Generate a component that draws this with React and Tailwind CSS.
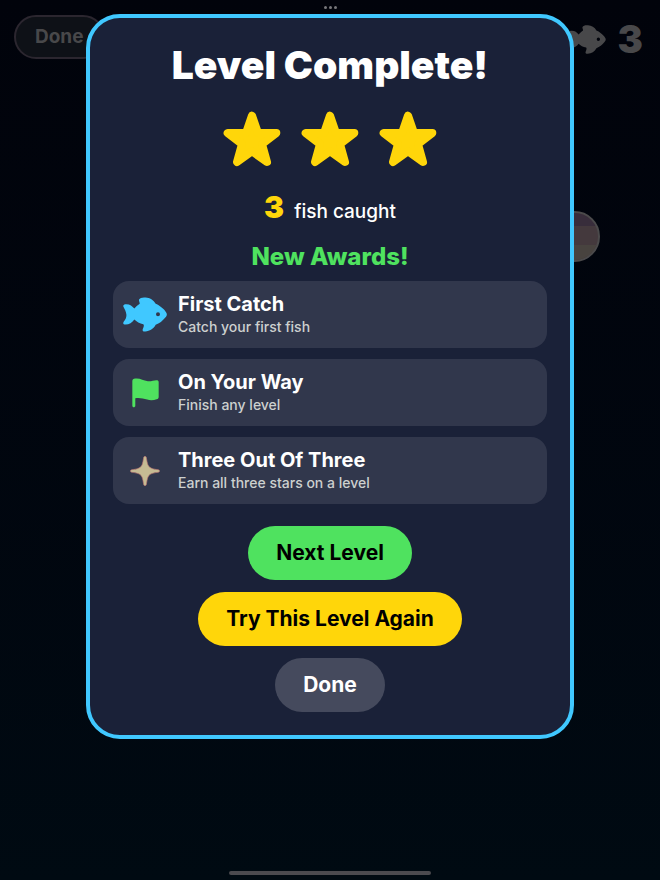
const FishIcon = ({ className }) => (
  <svg className={className} viewBox="0 0 132 104" fill="currentColor" aria-hidden="true">
    <path
      fillRule="evenodd"
      d="M1 28C0 23 3 21 10 21C21 21 28 27 34 34C39 29 43 25 50 20C51 17 47 12 48 7C51 2 58 0 68 1C80 2 92 8 98 20C108 24 121 34 127 42C133 50 133 54 127 61C119 71 109 79 98 83C92 95 80 102 67 103C60 104 57 100 60 94C62 89 64 85 61 81C50 79 41 74 34 67C28 76 18 82 8 82C1 82 -1 79 2 74C9 66 11 58 10 51C9 43 5 36 1 28ZM105 45A6 6 0 1 0 105 57A6 6 0 1 0 105 45Z"
    />
  </svg>
)

const StarIcon = () => (
  <svg className="w-[58px] h-14" viewBox="0 0 174 168" fill="currentColor" stroke="currentColor" strokeWidth="24" strokeLinejoin="round" aria-hidden="true">
    <path d="M87 14L105 66H160L117 99L132 153L87 121L42 153L57 99L14 66H69Z" />
  </svg>
)

const FlagIcon = ({ className }) => (
  <svg className={className} viewBox="0 0 82 88" fill="currentColor" aria-hidden="true">
    <path d="M1 8C1 3 4 1 10 0C24 -2 34 6 48 8C58 9 66 5 74 5C79 5 81 7 81 11V56C81 60 79 62 75 63C66 66 56 67 46 64C34 61 22 57 10 60V83C10 89 1 89 1 83Z" />
  </svg>
)

const SparkleIcon = ({ className }) => (
  <svg className={className} viewBox="0 0 92 92" fill="currentColor" stroke="#b5716f" strokeWidth="2" aria-hidden="true">
    <path d="M42 4C43 0 49 0 50 4C52 13 52 20 55 27C58 34 63 37 70 39C76 41 80 41 87 42C92 43 92 49 87 50C80 51 76 51 70 53C63 55 58 58 55 65C52 72 52 79 50 88C49 92 43 92 42 88C40 79 40 72 37 65C34 58 29 55 22 53C16 51 12 51 5 50C0 49 0 43 5 42C12 41 16 41 22 39C29 37 34 34 37 27C40 20 40 13 42 4Z" />
  </svg>
)

const awards = [
  {
    title: 'First Catch',
    description: 'Catch your first fish',
    icon: <FishIcon className="w-11 h-[35px] text-[#40c8ff]" />,
  },
  {
    title: 'On Your Way',
    description: 'Finish any level',
    icon: <FlagIcon className="w-[27px] h-[30px] text-[#4fe25f]" />,
  },
  {
    title: 'Three Out Of Three',
    description: 'Earn all three stars on a level',
    icon: <SparkleIcon className="size-[30px] text-[#c6bb93]" />,
  },
]

const AwardCard = ({ title, description, icon }) => (
  <li className="flex items-center gap-[11px] h-[67px] px-[10px] rounded-2xl bg-[#31374c]">
    <div className="flex w-11 justify-center">{icon}</div>
    <div>
      <h3 className="text-xl leading-6 font-bold text-white">{title}</h3>
      <p className="text-sm leading-[22px] font-medium text-[#cdd0cf]">{description}</p>
    </div>
  </li>
)

const PillButton = ({ className, children }) => (
  <button type="button" className={`h-[54px] px-7 rounded-full text-[21px] font-bold ${className}`}>
    {children}
  </button>
)

// Dimmed game screen that stays visible behind the dialog
const GameBackdrop = () => (
  <div className="absolute inset-0 overflow-hidden bg-linear-to-b from-[#01030b] to-[#000a12] text-[#48484a]">
    <div className="flex items-start justify-between px-[14px] pt-[15px]">
      <button type="button" className="h-11 px-[19px] rounded-full border-2 border-[#2b262f] bg-[#0e1117] text-[19px] font-bold">
        Done
      </button>
      <div className="flex items-center gap-3 pr-[3px] text-[38px] leading-12 font-black">
        <FishIcon className="w-[37px] h-[29px]" />
        <span>3</span>
      </div>
    </div>
    <div className="absolute top-[211px] left-[calc(50%+219px)] size-[51px] overflow-hidden rounded-full border-2 border-[#4b4a4b] bg-[#44393d]">
      <div className="h-[13px] bg-[#382d3b]" />
      <div className="mt-[19px] h-5 bg-[#48433f]" />
    </div>
  </div>
)

const App = () => {
  return (
    <div className="relative flex flex-col items-center min-h-screen font-['Inter',sans-serif]">
      <GameBackdrop />

      <div className="relative flex h-[14px] items-center gap-[2px]">
        <span className="size-[3px] rounded-full bg-[#77777a]" />
        <span className="size-[3px] rounded-full bg-[#77777a]" />
        <span className="size-[3px] rounded-full bg-[#77777a]" />
      </div>

      <main
        role="dialog"
        aria-labelledby="dialog-title"
        className="relative flex flex-col items-center w-full max-w-[488px] p-[23px] rounded-[34px] border-4 border-[#40c8ff] bg-[#1a2138]"
      >
        <h1 id="dialog-title" className="text-[39px] leading-12 font-black text-white">
          Level Complete!
        </h1>

        <div className="flex gap-5 mt-[22px] text-[#ffd60a]">
          <StarIcon />
          <StarIcon />
          <StarIcon />
        </div>

        <p className="flex items-baseline gap-[10px] mt-[22px] leading-9 text-[19px] font-medium text-white">
          <span className="text-[30px] font-black text-[#ffd60a]">3</span>
          fish caught
        </p>

        <h2 className="mt-[11px] text-2xl leading-8 font-extrabold text-[#4fe25f]">New Awards!</h2>

        <ul className="flex flex-col gap-[11px] w-full mt-2">
          {awards.map((award) => (
            <AwardCard key={award.title} {...award} />
          ))}
        </ul>

        <div className="flex flex-col items-center gap-3 mt-[22px]">
          <PillButton className="bg-[#4fe25f] text-black">Next Level</PillButton>
          <PillButton className="bg-[#ffd60a] text-black">Try This Level Again</PillButton>
          <PillButton className="bg-[#454a5d] text-white">Done</PillButton>
        </div>
      </main>

      <div className="relative mt-auto mb-[5px] h-1 w-[202px] rounded-full bg-[#4b4a4f]" />
    </div>
  )
}

export default App
